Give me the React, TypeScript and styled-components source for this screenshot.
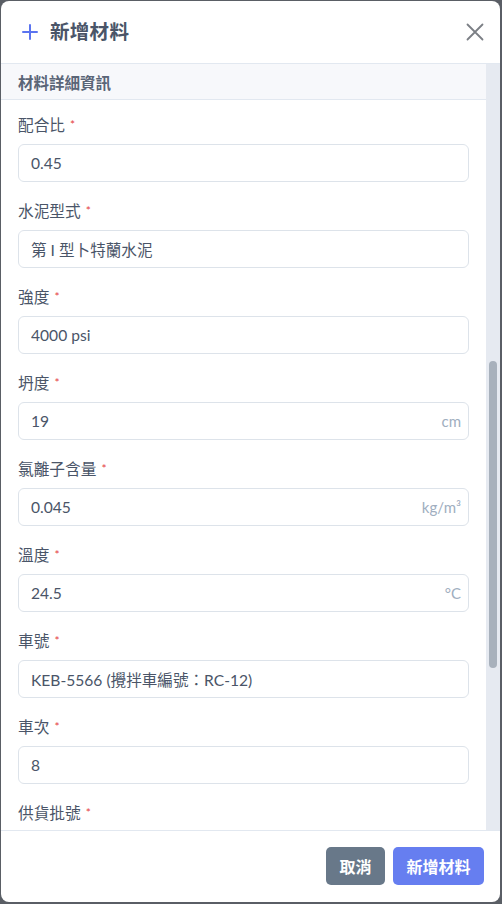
import React, { useCallback, useLayoutEffect, useRef, useState } from 'react';
import styled, { createGlobalStyle } from 'styled-components';

const GlobalStyle = createGlobalStyle`
  html, body {
    margin: 0;
    padding: 0;
    height: 100%;
    background: #5a5e65;
  }
  #root {
    height: 100%;
  }
  * {
    box-sizing: border-box;
  }
`;

const Backdrop = styled.div`
  height: 100vh;
  padding: 1px 2px 2px 1px;
  font-family: Lato, 'Noto Sans CJK TC', sans-serif;
`;

const Modal = styled.div`
  height: 100%;
  background: #fff;
  border-radius: 8px;
  display: flex;
  flex-direction: column;
  overflow: hidden;
`;

const Header = styled.div`
  height: 63px;
  flex-shrink: 0;
  display: flex;
  align-items: center;
  padding: 0 15px 0 21px;
  border-bottom: 1px solid #e2e8f0;
`;

const Title = styled.h2`
  flex: 1;
  margin: 0 0 0 12px;
  font-size: 19.5px;
  line-height: 1.2;
  font-weight: 700;
  color: #4a5568;
  letter-spacing: 0.3px;
`;

const CloseButton = styled.button`
  border: none;
  background: none;
  padding: 0;
  width: 20px;
  height: 20px;
  display: flex;
  align-items: center;
  justify-content: center;
  cursor: pointer;
`;

const Body = styled.div`
  flex: 1;
  min-height: 0;
  display: flex;
`;

const Scroller = styled.div`
  position: relative;
  flex: 1;
  overflow-y: scroll;
  scrollbar-width: none;
  &::-webkit-scrollbar {
    display: none;
  }
`;

const Track = styled.div`
  position: relative;
  width: 14px;
  flex-shrink: 0;
  background: #e6eaf1;
`;

const Thumb = styled.div`
  position: absolute;
  left: 3px;
  width: 8px;
  border-radius: 4px;
  background: #a8b1bc;
`;

const SectionHead = styled.div`
  position: sticky;
  top: 0;
  z-index: 1;
  height: 36px;
  display: flex;
  align-items: center;
  padding: 0 17px;
  background: #f7f8fb;
  border-bottom: 1px solid #e2e8f0;
  font-size: 15.5px;
  font-weight: 700;
  color: #5a6577;
`;

const SectionBody = styled.div`
  padding: 14px 17px 0;
`;

const Field = styled.div`
  margin-bottom: 18px;
`;

const Label = styled.label`
  display: block;
  font-size: 15.7px;
  line-height: 22px;
  color: #4a5568;
  margin-bottom: 8px;
`;

const Required = styled.span`
  color: #e53e3e;
  font-size: 12px;
  margin-left: 5px;
  vertical-align: top;
`;

const InputWrap = styled.div`
  height: 38px;
  border: 1px solid #dde3ea;
  border-radius: 6px;
  display: flex;
  align-items: center;
`;

const Input = styled.input`
  flex: 1;
  min-width: 0;
  height: 100%;
  border: none;
  background: transparent;
  outline: none;
  padding: 0 12px;
  font-family: inherit;
  font-size: 15.6px;
  color: #4a5568;
`;

const Suffix = styled.span`
  padding-right: 7px;
  font-size: 15px;
  color: #a0aec0;
`;

const Footer = styled.div`
  flex-shrink: 0;
  display: flex;
  justify-content: flex-end;
  gap: 8px;
  padding: 16px 16px 17px;
  border-top: 1px solid #e2e8f0;
`;

const Button = styled.button<{ $primary?: boolean }>`
  height: 38px;
  padding: 0 ${(p) => (p.$primary ? 13.5 : 13.5)}px;
  border: none;
  border-radius: 5px;
  font-family: inherit;
  font-size: 16px;
  font-weight: 700;
  color: #fff;
  background: ${(p) => (p.$primary ? '#667ef0' : '#687889')};
  cursor: pointer;
`;

interface FieldDef {
  label: string;
  value: string;
  suffix?: string;
}

const basicFields: FieldDef[] = [
  { label: '材料名稱', value: '預拌混凝土' },
  { label: '材料類別', value: '混凝土' },
  { label: '供應商', value: '台灣預拌股份有限公司' },
  { label: '進場日期', value: '2024-05-12' },
  { label: '進場時間', value: '09:30' },
  { label: '數量', value: '6', suffix: 'm³' },
  { label: '使用位置', value: '3F 樓板' },
  { label: '檢驗人員', value: '王小明' },
];

const detailFields: FieldDef[] = [
  { label: '配合比', value: '0.45' },
  { label: '水泥型式', value: '第 I 型卜特蘭水泥' },
  { label: '強度', value: '4000 psi' },
  { label: '坍度', value: '19', suffix: 'cm' },
  { label: '氯離子含量', value: '0.045', suffix: 'kg/m³' },
  { label: '溫度', value: '24.5', suffix: '°C' },
  { label: '車號', value: 'KEB-5566 (攪拌車編號：RC-12)' },
  { label: '車次', value: '8' },
  { label: '供貨批號', value: 'B-20240512-08' },
  { label: '出廠時間', value: '08:50' },
  { label: '澆置時間', value: '09:45' },
  { label: '試體組數', value: '3' },
  { label: '備註', value: '' },
];

const PlusIcon = () => (
  <svg width="16" height="16" viewBox="0 0 16 16" fill="none">
    <path d="M8 1v14M1 8h14" stroke="#5b74f0" strokeWidth="2" strokeLinecap="round" />
  </svg>
);

const CloseIcon = () => (
  <svg width="18" height="18" viewBox="0 0 18 18" fill="none">
    <path d="M1.5 1.5l15 15M16.5 1.5l-15 15" stroke="#7b7f85" strokeWidth="1.8" strokeLinecap="round" />
  </svg>
);

const FormField: React.FC<FieldDef> = ({ label, value, suffix }) => (
  <Field>
    <Label>
      {label}
      <Required>*</Required>
    </Label>
    <InputWrap>
      <Input defaultValue={value} />
      {suffix && <Suffix>{suffix}</Suffix>}
    </InputWrap>
  </Field>
);

export default function App() {
  const scrollRef = useRef<HTMLDivElement>(null);
  const detailRef = useRef<HTMLElement>(null);
  const [thumb, setThumb] = useState({ top: 0, height: 0 });

  const updateThumb = useCallback(() => {
    const el = scrollRef.current;
    if (!el) return;
    const track = el.clientHeight;
    const height = Math.max(30, (track * track) / el.scrollHeight);
    const max = el.scrollHeight - el.clientHeight;
    const top = max > 0 ? (el.scrollTop / max) * (track - height) : 0;
    setThumb({ top, height });
  }, []);

  useLayoutEffect(() => {
    if (scrollRef.current && detailRef.current) {
      scrollRef.current.scrollTop = detailRef.current.offsetTop;
    }
    updateThumb();
  }, [updateThumb]);

  return (
    <>
      <GlobalStyle />
      <Backdrop>
        <Modal>
          <Header>
            <PlusIcon />
            <Title>新增材料</Title>
            <CloseButton aria-label="關閉">
              <CloseIcon />
            </CloseButton>
          </Header>
          <Body>
            <Scroller ref={scrollRef} onScroll={updateThumb}>
              <section>
                <SectionHead>基本資訊</SectionHead>
                <SectionBody>
                  {basicFields.map((f) => (
                    <FormField key={f.label} {...f} />
                  ))}
                </SectionBody>
              </section>
              <section ref={detailRef}>
                <SectionHead>材料詳細資訊</SectionHead>
                <SectionBody>
                  {detailFields.map((f) => (
                    <FormField key={f.label} {...f} />
                  ))}
                </SectionBody>
              </section>
            </Scroller>
            <Track>
              <Thumb style={{ top: thumb.top, height: thumb.height }} />
            </Track>
          </Body>
          <Footer>
            <Button>取消</Button>
            <Button $primary>新增材料</Button>
          </Footer>
        </Modal>
      </Backdrop>
    </>
  );
}
